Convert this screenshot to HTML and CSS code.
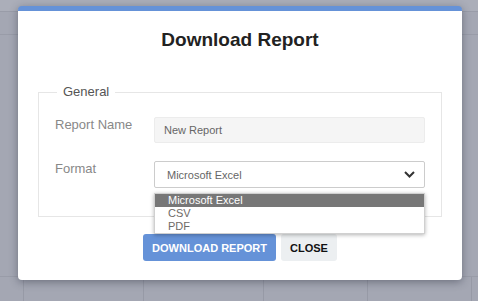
FILE: index.html
```html
<!doctype html>
<html>
<head>
    <meta charset="UTF-8">
    <title>Download Report</title>
    <link rel="stylesheet" href="styles.css">
</head>
<body>
<div class="modal">
    <h1>Download Report</h1>
    <fieldset class="group">
        <legend>General</legend>
        <div class="row">
            <label for="reportName">Report Name</label>
            <input type="text" id="reportName" class="field readonly" value="New Report">
        </div>
        <div class="row">
            <label for="format">Format</label>
            <div class="select-wrap">
                <div class="field select" id="format">
                    <span>Microsoft Excel</span>
                    <svg width="11" height="7" viewBox="0 0 11 7"><path d="M1 1l4.5 4.5L10 1" fill="none" stroke="#333" stroke-width="2"/></svg>
                </div>
                <ul class="options">
                    <li class="active">Microsoft Excel</li>
                    <li>CSV</li>
                    <li>PDF</li>
                </ul>
            </div>
        </div>
    </fieldset>
    <div class="actions">
        <button class="btn primary">Download Report</button>
        <button class="btn">Close</button>
    </div>
</div>
</body>
</html>
```

FILE: styles.css
```css
body {
    margin: 0;
    width: 478px;
    height: 301px;
    overflow: hidden;
    font-family: 'Liberation Sans', Arial, sans-serif;
    background-color: #a4a7b3;
    background-image:
        linear-gradient(#999ca8, #999ca8),
        linear-gradient(#999ca8, #999ca8),
        linear-gradient(#999ca8, #999ca8),
        linear-gradient(#abaeb9, #abaeb9),
        linear-gradient(to right, transparent 23px, #979aa6 23px, #979aa6 24px, transparent 24px, transparent 143px, #979aa6 143px, #979aa6 144px, transparent 144px, transparent 263px, #979aa6 263px, #979aa6 264px, transparent 264px, transparent 367px, #979aa6 367px, #979aa6 368px, transparent 368px, transparent 471px, #979aa6 471px, #979aa6 472px, transparent 472px);
    background-size: 100% 1px, 100% 1px, 100% 1px, 100% 11px, 100% 25px;
    background-position: 0 11px, 0 34px, 0 276px, 0 0, 0 276px;
    background-repeat: no-repeat;
}
.modal {
    margin: 6px 0 0 18px;
    width: 444px;
    height: 274px;
    box-sizing: border-box;
    padding: 0 20px;
    background: #fff;
    border-top: 5px solid #6592d8;
    border-radius: 4px;
    box-shadow: 0 2px 8px rgba(40, 44, 60, 0.45);
}
h1 {
    margin: 18px 0 33px;
    text-align: center;
    font-size: 19px;
    line-height: 22px;
    font-weight: bold;
    color: #222;
}
.group {
    margin: 0;
    padding: 17px 16px 28px;
    border: 1px solid #e6e6e6;
}
.group legend {
    margin-left: 2px;
    padding: 0 6px;
    font-size: 13px;
    line-height: 16px;
    color: #555;
}
.row {
    display: flex;
    align-items: flex-start;
}
.row + .row {
    margin-top: 18px;
}
.row label {
    width: 99px;
    flex: none;
    font-size: 13px;
    line-height: 16px;
    color: #888;
}
.field {
    flex: 1;
    box-sizing: border-box;
    height: 26px;
    margin: 0;
    font-family: inherit;
    font-size: 11px;
    color: #666;
    border-radius: 2px;
}
.readonly {
    padding: 0 9px;
    background: #f5f5f5;
    border: 1px solid #ececec;
    outline: none;
}
.select-wrap {
    flex: 1;
    position: relative;
}
.select {
    height: 27px;
    display: flex;
    align-items: center;
    justify-content: space-between;
    padding: 0 9px 0 12px;
    background: #fff;
    border: 1px solid #ccc;
}
.options {
    position: absolute;
    top: 32px;
    left: 0;
    right: 0;
    margin: 0;
    padding: 0;
    list-style: none;
    background: #fff;
    border: 1px solid #d0d0d0;
    box-shadow: 0 1px 4px rgba(0, 0, 0, 0.3);
}
.options li {
    height: 13px;
    line-height: 13px;
    padding-left: 13px;
    font-size: 11px;
    color: #6e6a66;
}
.options li.active {
    background: #777;
    color: #fff;
}
.actions {
    display: flex;
    justify-content: center;
    gap: 5px;
    margin-top: 17px;
}
.btn {
    height: 27px;
    padding: 0 9px;
    border: none;
    border-radius: 3px;
    background: #eceff1;
    color: #111;
    font-family: inherit;
    font-size: 11px;
    font-weight: bold;
    text-transform: uppercase;
}
.btn.primary {
    background: #6592d8;
    color: #fff;
}
```
